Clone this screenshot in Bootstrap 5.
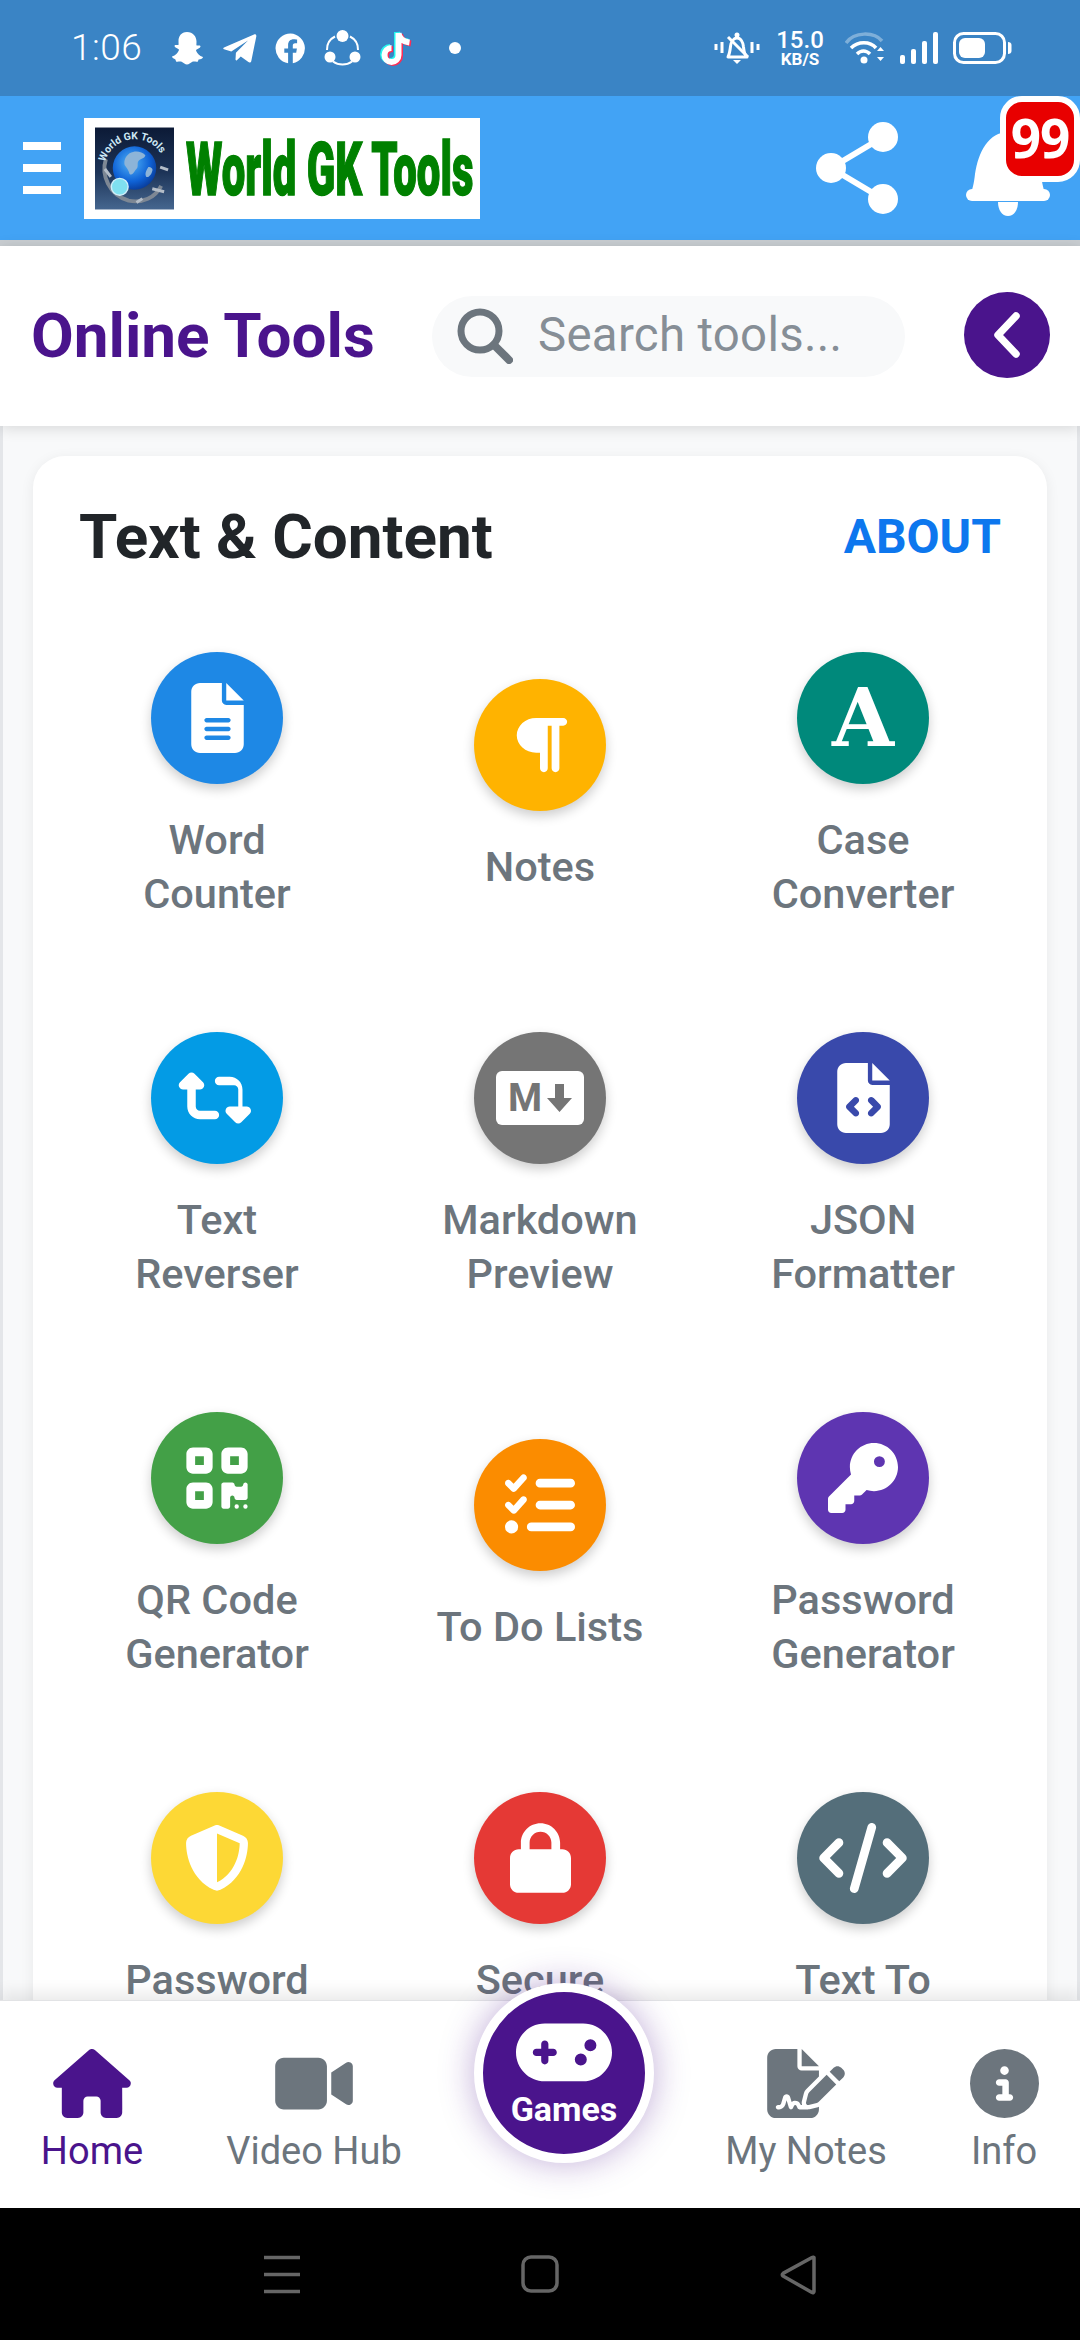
<!doctype html>
<html lang="en">
<head>
<meta charset="utf-8">
<title>Online Tools</title>
<link rel="stylesheet" href="https://cdn.jsdelivr.net/npm/bootstrap@5.3.0/dist/css/bootstrap.min.css">
<style>
html,body{margin:0;height:2340px;overflow:hidden;background:#000;}
body{font-family:Roboto,"Liberation Sans",sans-serif;width:1080px;}
svg{display:block;}
.screen{width:1080px;height:2340px;display:flex;flex-direction:column;overflow:hidden;}
.sbar{height:96px;background:#3a84c5;color:#fff;flex:none;padding-left:71px;}
.clock{font-size:37px;font-weight:300;width:99px;letter-spacing:.5px;}
.st-icons{gap:18px;}
.st-right{margin-left:auto;padding-right:68px;gap:15px;}
.speed{line-height:1;text-align:center;font-weight:500;width:50px;}
.speed b{display:block;font-size:24px;font-weight:500;line-height:22px;}
.speed i{display:block;font-size:17px;font-style:normal;font-weight:700;line-height:17px;}
.topbar{height:144px;background:#42a3f5;flex:none;position:relative;padding-left:23px;}
.burger{width:38px;display:flex;flex-direction:column;gap:14px;}
.burger span{height:8px;background:#fff;display:block;}
.logo-box{width:396px;height:101px;background:#fff;margin-left:23px;padding:9px 11px;gap:12px;}
.top-right{margin-left:auto;}
.share-ic{margin-right:68px;}
.bell-wrap{width:114px;height:144px;position:relative;}
.bell-ic{position:absolute;left:0;top:34px;}
.nbadge{position:absolute;left:34px;top:0;width:80px;height:86px;border:6px solid #fff;border-radius:22px;background:#e80000;color:#fff;font-family:"Noto Sans",sans-serif;font-weight:700;font-size:53px;line-height:72px;text-align:center;letter-spacing:-1px;}
.graybar{height:6px;background:#c9ced2;flex:none;}
.subhead{height:180px;background:#fff;flex:none;padding:0 30px 0 31px;position:relative;z-index:2;box-shadow:0 2px 14px rgba(0,0,0,.14);}
.page-title{font-size:62px;font-weight:700;color:#4a148c;margin:0;white-space:nowrap;width:401px;}
.searchbox{width:473px;height:81px;border-radius:41px;background:#f8f9fa;padding-left:25px;gap:25px;color:#868e96;font-size:47.4px;letter-spacing:.3px;}
.backbtn{width:86px;height:86px;border-radius:50%;background:#4a148c;margin-left:auto;padding:0;border:0;margin-top:-3px;}
.main{flex:1 1 auto;min-height:0;background:#f8f9fa;position:relative;overflow:hidden;padding:30px 30px 0;border-left:3px solid #e4e6e9;border-right:3px solid #e4e6e9;}
.tool-card{background:#fff;border-radius:32px;box-shadow:0 3px 14px rgba(0,0,0,.07);padding:0 46px;height:1700px;}
.card-top{height:162px;}
.card-title{font-size:62px;font-weight:700;color:#212529;margin:0;}
.about-link{font-size:48px;font-weight:700;color:#0d77ee;text-decoration:none;}
.tool-grid{display:grid;grid-template-columns:repeat(3,323px);grid-auto-rows:268px;row-gap:112px;margin:34px -23.5px 0;}
.tool{display:flex;flex-direction:column;align-items:center;justify-content:center;text-align:center;color:#6c757d;font-size:41.5px;font-weight:500;line-height:53.5px;}
.tool-cut{justify-content:flex-start;}
.disc{width:132px;height:132px;border-radius:50%;display:flex;align-items:center;justify-content:center;color:#fff;box-shadow:0 5px 12px rgba(0,0,0,.2);margin-bottom:29px;flex:none;}
.disc svg{fill:currentColor;}
.disc-a{font-family:"DejaVu Serif",serif;font-weight:700;font-size:80px;line-height:1;}
.md-box{width:88px;height:54px;background:#fff;border-radius:6px;color:#757575;gap:5px;}
.md-box span{font-family:Roboto,sans-serif;font-weight:700;font-size:39px;line-height:1;}
.botnav{height:208px;flex:none;background:#fff;position:relative;z-index:3;display:grid;grid-template-columns:184px 260px 240px 244px 152px;box-shadow:0 -8px 14px rgba(0,0,0,.08);border-top:1px solid #e2e3e5;}
.nav-it{display:flex;flex-direction:column;align-items:center;color:#6c757d;text-decoration:none;font-size:38px;line-height:1;padding-top:48px;}
.nav-it.on{color:#4a148c;}
.nav-it svg{fill:currentColor;height:69px;margin-bottom:14px;}
.games{position:absolute;left:474px;top:-18px;width:180px;height:180px;border-radius:50%;background:#4a148c;border:9px solid #fff;box-shadow:0 0 34px rgba(74,20,140,.35);color:#fff;display:flex;flex-direction:column;align-items:center;font-size:34px;font-weight:700;line-height:1;padding-top:22px;text-decoration:none;}
.games svg{fill:#fff;margin-bottom:1px;flex:none;}
.sysnav{height:132px;background:#000;flex:none;position:relative;}
.sysnav svg{position:absolute;left:0;top:0;}
</style>
</head>
<body>
<div class="screen">

<div class="sbar d-flex align-items-center">
  <span class="clock">1:06</span>
  <div class="st-icons d-flex align-items-center">
    <svg width="34" height="34" viewBox="0 0 34 34"><path fill="#fff" d="M17 1c6 0 9.500 4.500 9.500 9.500 0 1.500-.1 2.800-.1 3.800 1.400.9 3.100-.5 4 .8.600 1-1 2.300-3.700 3.300-.6.300-.8.700-.5 1.500 1 2.500 3.200 5 6.800 6-.1 1.400-1.900 2.100-4.400 2.500-.5.800-.3 2-1.200 2.300-1.400.4-3.300-.6-5.400.2-1.600.6-3 2.600-5 2.600s-3.400-2-5-2.600c-2.100-.8-4 .2-5.400-.2-.9-.3-.7-1.500-1.200-2.300C3.900 27.500 2.100 26.800 2 25.400c3.600-1 5.800-3.500 6.800-6 .3-.8.100-1.200-.5-1.500-2.700-1-4.300-2.300-3.700-3.300.9-1.300 2.600.1 4-.8 0-1-.1-2.300-.1-3.800C8.500 5.500 11 1 17 1z"/></svg>
    <svg width="34" height="30" viewBox="0 0 34 30" style="margin-left:1px"><path fill="#fff" d="M1 14.500 31 1.500c1.500-.6 2.600.4 2.300 1.900l-5 24.500c-.3 1.500-1.700 2-2.900 1.200l-7.600-5.500-3.900 3.600c-.6.500-1.400.2-1.400-.6l.4-6.800L25 7.500 8.300 18.500 1 16.200c-1-.3-1-1.300 0-1.700z"/></svg>
    <svg width="31" height="31" viewBox="0 0 31 31"><path fill="#fff" d="M15.500 0.500a15 15 0 0 0-2.400 29.800V19.800H9.300v-4.300h3.800v-3.300c0-3.800 2.200-5.900 5.700-5.900 1.600 0 3.300.3 3.300.3v3.700h-1.900c-1.900 0-2.400 1.200-2.400 2.300v2.800h4.100l-.7 4.300h-3.400v10.500a15 15 0 0 0-2.300-29.700z"/></svg>
    <svg width="37" height="38" viewBox="0 0 37 38"><g fill="none" stroke="#fff" stroke-width="2"><path d="M11 7.500C6 10 2.800 15 3 21"/><path d="M26 7.500c5 2.500 8.200 7.500 8 13.500"/><path d="M9 32.500c5.500 4 13.500 4 19 0"/></g><circle cx="18.500" cy="7" r="6" fill="#fff"/><circle cx="6" cy="28" r="5.500" fill="#fff"/><circle cx="31" cy="28" r="5.500" fill="#fff"/></svg>
    <svg width="34" height="38" viewBox="0 0 34 38"><path fill="none" stroke="#25f4ee" stroke-width="6" d="M18 3v22a7 7 0 1 1-7-7M18 3c.5 5 4 8.500 11 9.500"/><path fill="none" stroke="#fe2c55" stroke-width="6" d="M21 5v22a7 7 0 1 1-7-7M21 5c.5 5 4 8.500 11 9.500"/><path fill="none" stroke="#fff" stroke-width="6" d="M19.500 4v22a7 7 0 1 1-7-7M19.500 4c.5 5 4 8.500 11 9.500"/></svg>
    <svg width="12" height="12" viewBox="0 0 12 12" style="margin-left:18px"><circle cx="6" cy="6" r="6" fill="#fff"/></svg>
  </div>
  <div class="st-right d-flex align-items-center">
    <svg width="46" height="32" viewBox="0 0 46 32"><g fill="none" stroke="#fff" stroke-width="3" stroke-linejoin="round"><path d="M14 25h19c-3-3-3-6-3.500-10C29 10 26.500 6 23 6c-3.500 0-6 4-6.500 8.500-.4 3.500-1 7.500-2.500 10.500z"/><path d="M14 5l20 20"/><path d="M2 12v6M8 10v11M38 10v11M44 12v6"/></g><circle cx="23" cy="3" r="2.500" fill="#fff"/><path d="M19 28h8l-4 4z" fill="#fff"/></svg>
    <div class="speed"><b>15.0</b><i>KB/S</i></div>
    <svg width="40" height="32" viewBox="0 0 40 32" style="margin-left:5px"><path d="M1 11C9-.5 29-.5 37 9" fill="none" stroke="#fff" stroke-opacity=".35" stroke-width="3.500"/><path d="M6 16c7-7 19-7 25 0M12 22c4-4 9-4 13 0" fill="none" stroke="#fff" stroke-width="3.500"/><circle cx="19" cy="28" r="3.500" fill="#fff"/><path d="M32 19l3.500-4 3.500 4zM32 25l3.500 4 3.500-4z" fill="#fff"/></svg>
    <svg width="38" height="32" viewBox="0 0 38 32"><g fill="#fff"><rect x="0" y="23" width="5" height="9" rx="2"/><rect x="11" y="17" width="5" height="15" rx="2"/><rect x="22" y="9" width="5" height="23" rx="2"/><rect x="33" y="0" width="5" height="32" rx="2"/></g></svg>
    <svg width="59" height="32" viewBox="0 0 59 32"><rect x="1.500" y="1.500" width="50" height="29" rx="9" fill="none" stroke="#fff" stroke-width="3"/><rect x="6" y="6" width="26" height="20" rx="6" fill="#fff"/><path d="M55 10c2 0 3.500 1 3.500 3v6c0 2-1.500 3-3.500 3z" fill="#fff"/></svg>
  </div>
</div>

<div class="topbar d-flex align-items-center">
  <div class="burger" aria-label="Menu"><span></span><span></span><span></span></div>
  <div class="logo-box d-flex align-items-center">
    <svg width="80" height="83" viewBox="0 0 80 83" role="img" aria-label="Globe logo">
      <defs>
        <linearGradient id="lg-bg" x1="0" y1="0" x2="0" y2="1"><stop offset="0" stop-color="#0c1a36"/><stop offset=".55" stop-color="#1d3458"/><stop offset="1" stop-color="#45668f"/></linearGradient>
        <radialGradient id="lg-gl" cx=".42" cy=".38" r=".72"><stop offset="0" stop-color="#52b4f7"/><stop offset=".6" stop-color="#0f62d6"/><stop offset="1" stop-color="#062f85"/></radialGradient>
        <path id="lg-arc" d="M10 36A31 31 0 0 1 70 34"/>
      </defs>
      <rect width="80" height="83" fill="url(#lg-bg)"/>
      <path d="M11 32C6 48 14 68 34 74c14 3 27-3 33-15" fill="none" stroke="#7d8794" stroke-width="4"/>
      <circle cx="40" cy="41" r="22" fill="url(#lg-gl)"/>
      <path d="M35 26c6-3 12-2 16 2-1 4-5 3-7 6s1 6-3 9c-2 3-4 6-6 4-1-4-3-6-5-9-1-5 1-9 5-12z" fill="#8db4d8"/>
      <path d="M54 40c3 0 5 2 4 4-1 4-4 7-6 6-2-3 0-7 2-10z" fill="#8db4d8"/>
      <circle cx="25" cy="60" r="8.500" fill="#7fe0f0" stroke="#cfeffa" stroke-width="1.500"/>
      <path d="M58 62l12 3M66 40l8 3M10 42l6 8M48 72l-6 4" stroke="#b4bdc8" stroke-width="3" fill="none"/>
      <text fill="#cfe9f5" font-family="Roboto,sans-serif" font-size="10.500" font-weight="700"><textPath href="#lg-arc" startOffset="1">World GK Tools</textPath></text>
    </svg>
    <svg width="283" height="83" viewBox="0 0 283 83" role="img" aria-label="World GK Tools" style="overflow:visible"><text x="0" y="0" transform="translate(0 68) scale(.566 1)" fill="#008000" stroke="#008000" stroke-width="1.500" font-family="Roboto,sans-serif" font-weight="900" font-size="74">World GK Tools</text></svg>
  </div>
  <div class="top-right d-flex align-items-center">
    <svg class="share-ic" width="82" height="92" viewBox="0 0 82 92"><path d="M15 46 67 15M15 46 67 77" stroke="#fff" stroke-width="6"/><circle cx="15" cy="46" r="15" fill="#fff"/><circle cx="67" cy="15" r="15" fill="#fff"/><circle cx="67" cy="77" r="15" fill="#fff"/></svg>
    <div class="bell-wrap">
      <svg class="bell-ic" width="84" height="88" viewBox="0 0 84 88"><path fill="#fff" d="M42 2C23 2 12 22 9 44 8 54 6 60 6 60h72s-2-6-3-16C72 22 61 2 42 2z"/><rect x="0" y="59" width="84" height="12" rx="6" fill="#fff"/><path d="M32 72h20c0 8-4 14-10 14s-10-6-10-14z" fill="#fff"/></svg>
      <span class="nbadge">99</span>
    </div>
  </div>
</div>
<div class="graybar"></div>

<div class="subhead d-flex align-items-center">
  <h1 class="page-title">Online Tools</h1>
  <div class="searchbox d-flex align-items-center">
    <svg width="56" height="56" viewBox="0 0 56 56"><circle cx="23" cy="23" r="19" fill="none" stroke="#6c757d" stroke-width="7"/><path d="M37 37 52 52" stroke="#6c757d" stroke-width="8" stroke-linecap="round"/></svg>
    <span>Search tools...</span>
  </div>
  <button class="backbtn d-flex align-items-center justify-content-center" type="button" aria-label="Back"><svg width="30" height="48" viewBox="0 0 30 48"><path d="M24 5 6 24l18 19" fill="none" stroke="#fff" stroke-width="7.500" stroke-linecap="round" stroke-linejoin="round"/></svg></button>
</div>

<main class="main">
  <section class="tool-card">
    <div class="card-top d-flex justify-content-between align-items-center">
      <h2 class="card-title">Text &amp; Content</h2>
      <a class="about-link" href="#">ABOUT</a>
    </div>
    <div class="tool-grid">
      <div class="tool"><div class="disc" style="background:#1e88e5"><svg width="53" height="70" viewBox="0 0 384 512"><path d="M64 0C28.700 0 0 28.700 0 64V448c0 35.300 28.700 64 64 64H320c35.300 0 64-28.700 64-64V160H256c-17.700 0-32-14.300-32-32V0H64zM256 0V128H384L256 0zM112 256H272c8.800 0 16 7.200 16 16s-7.200 16-16 16H112c-8.800 0-16-7.200-16-16s7.200-16 16-16zm0 64H272c8.800 0 16 7.200 16 16s-7.200 16-16 16H112c-8.800 0-16-7.200-16-16s7.200-16 16-16zm0 64H272c8.800 0 16 7.200 16 16s-7.200 16-16 16H112c-8.800 0-16-7.200-16-16s7.200-16 16-16z"/></svg></div>Word<br>Counter</div>
      <div class="tool"><div class="disc" style="background:#ffb300"><svg width="56" height="62" viewBox="0 0 448 512"><path d="M192 32h224c17.700 0 32 14.300 32 32s-14.300 32-32 32H384v352c0 17.700-14.300 32-32 32s-32-14.300-32-32V96H288v352c0 17.700-14.300 32-32 32s-32-14.300-32-32V320H192c-88.400 0-160-64-160-144S103.600 32 192 32z"/></svg></div>Notes</div>
      <div class="tool"><div class="disc disc-a" style="background:#00897b">A</div>Case<br>Converter</div>

      <div class="tool"><div class="disc" style="background:#039be5"><svg width="78" height="68" viewBox="0 0 576 512"><path d="M272 416c17.700 0 32-14.300 32-32s-14.300-32-32-32H160c-17.700 0-32-14.300-32-32V192h32c12.900 0 24.600-7.800 29.600-19.800s2.200-25.700-6.900-34.900l-64-64c-12.500-12.500-32.800-12.500-45.300 0l-64 64c-9.200 9.200-11.900 22.900-6.900 34.900s16.600 19.800 29.600 19.800l32 0 0 128c0 53 43 96 96 96H272zM304 96c-17.700 0-32 14.300-32 32s14.300 32 32 32l112 0c17.700 0 32 14.300 32 32l0 128H384c-12.900 0-24.600 7.800-29.600 19.800s-2.200 25.700 6.900 34.900l64 64c12.500 12.500 32.800 12.500 45.300 0l64-64c9.200-9.200 11.900-22.900 6.900-34.900s-16.600-19.800-29.600-19.800l-32 0V192c0-53-43-96-96-96L304 96z"/></svg></div>Text<br>Reverser</div>
      <div class="tool"><div class="disc" style="background:#757575"><div class="md-box d-flex align-items-center justify-content-center"><span>M</span><svg width="25" height="28" viewBox="0 0 25 28"><path d="M8 0h9v14h8L12.500 28 0 14h8z"/></svg></div></div>Markdown<br>Preview</div>
      <div class="tool"><div class="disc" style="background:#3949ab"><svg width="53" height="70" viewBox="0 0 384 512"><path d="M64 0C28.700 0 0 28.700 0 64V448c0 35.300 28.700 64 64 64H320c35.300 0 64-28.700 64-64V160H256c-17.700 0-32-14.300-32-32V0H64zM256 0V128H384L256 0zM153 289l-31 31 31 31c9.400 9.400 9.400 24.600 0 33.900s-24.600 9.400-33.900 0L71 337c-9.400-9.400-9.400-24.600 0-33.900l48-48c9.400-9.400 24.600-9.400 33.900 0s9.400 24.600 0 33.900zM265 255l48 48c9.400 9.400 9.400 24.600 0 33.900l-48 48c-9.400 9.400-24.600 9.400-33.900 0s-9.400-24.600 0-33.900l31-31-31-31c-9.400-9.400-9.400-24.600 0-33.900s24.600-9.400 33.900 0z"/></svg></div>JSON<br>Formatter</div>

      <div class="tool"><div class="disc" style="background:#43a047"><svg width="62" height="70" viewBox="0 0 448 512"><path d="M0 80C0 53.500 21.500 32 48 32h96c26.500 0 48 21.500 48 48v96c0 26.500-21.500 48-48 48H48c-26.500 0-48-21.500-48-48V80zM64 96v64h64V96H64zM0 336c0-26.500 21.500-48 48-48h96c26.500 0 48 21.500 48 48v96c0 26.500-21.500 48-48 48H48c-26.500 0-48-21.500-48-48V336zm64 16v64h64V352H64zM304 32h96c26.500 0 48 21.500 48 48v96c0 26.500-21.500 48-48 48H304c-26.500 0-48-21.500-48-48V80c0-26.500 21.500-48 48-48zm80 64H320v64h64V96zM256 304c0-8.800 7.200-16 16-16h64c8.800 0 16 7.200 16 16s7.200 16 16 16h32c8.800 0 16-7.200 16-16s7.200-16 16-16s16 7.200 16 16v96c0 8.800-7.200 16-16 16H368c-8.800 0-16-7.200-16-16s-7.200-16-16-16s-16 7.200-16 16v64c0 8.800-7.200 16-16 16H272c-8.800 0-16-7.200-16-16V304zM368 480a16 16 0 1 1 0-32 16 16 0 1 1 0 32zm64 0a16 16 0 1 1 0-32 16 16 0 1 1 0 32z"/></svg></div>QR Code<br>Generator</div>
      <div class="tool"><div class="disc" style="background:#fb8c00"><svg width="70" height="70" viewBox="0 0 512 512"><path d="M152.100 38.200c9.900 8.900 10.700 24 1.800 33.900l-72 80c-4.400 4.900-10.600 7.800-17.200 7.900s-12.900-2.400-17.600-7L7 113C-2.300 103.600-2.300 88.400 7 79s24.600-9.400 33.900 0l22.100 22.100 55.100-61.200c8.900-9.900 24-10.700 33.900-1.800zm0 160c9.900 8.900 10.700 24 1.800 33.900l-72 80c-4.400 4.900-10.600 7.800-17.200 7.900s-12.900-2.400-17.600-7L7 273c-9.400-9.400-9.400-24.600 0-33.900s24.600-9.400 33.900 0l22.100 22.100 55.100-61.200c8.900-9.900 24-10.700 33.900-1.800zM224 96c0-17.700 14.300-32 32-32H480c17.700 0 32 14.300 32 32s-14.300 32-32 32H256c-17.700 0-32-14.300-32-32zm0 160c0-17.700 14.300-32 32-32H480c17.700 0 32 14.300 32 32s-14.300 32-32 32H256c-17.700 0-32-14.300-32-32zM160 416c0-17.700 14.300-32 32-32H480c17.700 0 32 14.300 32 32s-14.300 32-32 32H192c-17.700 0-32-14.300-32-32zM48 368a48 48 0 1 1 0 96 48 48 0 1 1 0-96z"/></svg></div>To Do Lists</div>
      <div class="tool"><div class="disc" style="background:#5e35b1"><svg width="70" height="70" viewBox="0 0 512 512"><path d="M336 352c97.200 0 176-78.800 176-176S433.200 0 336 0S160 78.800 160 176c0 18.700 2.900 36.800 8.300 53.700L7 391c-4.500 4.500-7 10.600-7 17v80c0 13.300 10.700 24 24 24h80c13.300 0 24-10.700 24-24V448h40c13.300 0 24-10.700 24-24V384h40c6.400 0 12.500-2.500 17-7l33.300-33.300c16.900 5.400 35 8.300 53.700 8.300zM376 96a40 40 0 1 1 0 80 40 40 0 1 1 0-80z"/></svg></div>Password<br>Generator</div>

      <div class="tool tool-cut"><div class="disc" style="background:#fdd835"><svg width="66" height="70" viewBox="0 0 512 512"><path d="M256 0c4.600 0 9.200 1 13.400 2.900L457.700 82.800c22 9.300 38.400 31 38.300 57.200c-.5 99.200-41.300 280.700-213.600 363.200c-16.700 8-36.100 8-52.800 0C57.300 420.700 16.500 239.200 16 140c-.1-26.200 16.300-47.900 38.300-57.200L242.700 2.900C246.800 1 251.400 0 256 0zm0 66.800V444.800C394 378 431.100 230.100 432 141.400L256 66.800l0 0z"/></svg></div>Password</div>
      <div class="tool tool-cut"><div class="disc" style="background:#e53935"><svg width="61" height="70" viewBox="0 0 448 512"><path d="M144 144v48H304V144c0-44.200-35.800-80-80-80s-80 35.800-80 80zM80 192V144C80 64.500 144.500 0 224 0s144 64.500 144 144v48h16c35.300 0 64 28.700 64 64V448c0 35.300-28.700 64-64 64H64c-35.300 0-64-28.700-64-64V256c0-35.300 28.700-64 64-64H80z"/></svg></div>Secure</div>
      <div class="tool tool-cut"><div class="disc" style="background:#546e7a"><svg width="88" height="70" viewBox="0 0 640 512"><path d="M392.800 1.200c-17-4.900-34.700 5-39.600 22l-128 448c-4.900 17 5 34.700 22 39.600s34.700-5 39.600-22l128-448c4.900-17-5-34.700-22-39.600zm80.600 120.100c-12.500 12.500-12.500 32.800 0 45.300L562.700 256l-89.400 89.400c-12.500 12.500-12.500 32.800 0 45.300s32.800 12.500 45.300 0l112-112c12.500-12.500 12.500-32.800 0-45.300l-112-112c-12.500-12.500-32.800-12.500-45.300 0zm-306.700 0c-12.500-12.500-32.800-12.500-45.300 0l-112 112c-12.500 12.500-12.500 32.800 0 45.300l112 112c12.500 12.500 32.800 12.500 45.300 0s12.500-32.800 0-45.300L77.300 256l89.400-89.400c12.500-12.500 12.500-32.800 0-45.300z"/></svg></div>Text To</div>
    </div>
  </section>
</main>

<nav class="botnav">
  <a class="nav-it on" href="#"><svg width="78" viewBox="0 0 576 512"><path d="M575.800 255.500c0 18-15 32.100-32 32.100h-32l.7 160.200c0 2.700-.2 5.400-.5 8.100V472c0 22.100-17.900 40-40 40H456c-1.100 0-2.200 0-3.300-.1c-1.400 .1-2.800 .1-4.200 .1H416 392c-22.100 0-40-17.900-40-40V448 384c0-17.700-14.300-32-32-32H256c-17.700 0-32 14.300-32 32v64 24c0 22.100-17.900 40-40 40H160 128.100c-1.500 0-3-.1-4.500-.2c-1.200 .1-2.400 .2-3.600 .2H104c-22.100 0-40-17.900-40-40V360c0-.9 0-1.900 .1-2.800V287.600H32c-18 0-32-14-32-32.100c0-9 3-17 10-24L266.400 8c7-7 15-8 22-8s15 2 21 7L564.800 231.500c8 7 12 15 11 24z"/></svg>Home</a>
  <a class="nav-it" href="#"><svg width="78" viewBox="0 0 576 512"><path d="M0 128C0 92.700 28.700 64 64 64H320c35.300 0 64 28.700 64 64V384c0 35.300-28.700 64-64 64H64c-35.300 0-64-28.700-64-64V128zM559.100 99.800c10.400 5.600 16.900 16.400 16.900 28.200V384c0 11.800-6.500 22.600-16.900 28.200s-23 5-32.900-1.600l-96-64L416 337.100V320 192 174.900l14.200-9.500 96-64c9.800-6.500 22.400-7.200 32.900-1.600z"/></svg>Video Hub</a>
  <div></div>
  <a class="nav-it" href="#"><svg width="78" viewBox="0 0 576 512"><path d="M64 0C28.700 0 0 28.700 0 64V448c0 35.300 28.700 64 64 64H320c35.300 0 64-28.700 64-64V428.700c-2.700 1.100-5.400 2-8.200 2.700l-60.100 15c-3 .7-6 1.200-9 1.400c-.9 .1-1.800 .2-2.700 .2H240c-6.100 0-11.600-3.400-14.300-8.800l-8.800-17.700c-1.700-3.400-5.100-5.500-8.800-5.500s-7.200 2.100-8.800 5.500l-8.800 17.700c-2.900 5.900-9.200 9.400-15.700 8.800s-12.100-5.100-13.900-11.300L144 381l-9.800 32.800c-6.100 20.300-24.800 34.200-46 34.200H80c-8.800 0-16-7.200-16-16s7.200-16 16-16h8.200c7.100 0 13.300-4.600 15.300-11.400l14.900-49.500c3.400-11.300 13.800-19.100 25.600-19.100s22.200 7.800 25.600 19.100l11.600 38.600c7.400-6.200 16.800-9.700 26.800-9.700c15.900 0 30.400 9 37.500 23.200l4.400 8.800h8.900c-3.100-8.800-3.700-18.400-1.400-27.800l15-60.100c2.800-11.300 8.600-21.500 16.900-29.700L384 203.600V160H256c-17.700 0-32-14.300-32-32V0H64zM256 0V128H384L256 0zM549.800 139.700c-15.600-15.600-40.900-15.600-56.600 0l-29.400 29.400 71 71 29.400-29.400c15.600-15.600 15.600-40.900 0-56.600l-14.400-14.400zM311.900 321c-4.100 4.100-7 9.200-8.400 14.900l-15 60.100c-1.400 5.500 .2 11.200 4.200 15.200s9.700 5.600 15.200 4.200l60.100-15c5.600-1.400 10.800-4.300 14.900-8.400L512.100 262.700l-71-71L311.900 321z"/></svg>My Notes</a>
  <a class="nav-it" href="#"><svg width="69" viewBox="0 0 512 512"><path d="M256 512A256 256 0 1 0 256 0a256 256 0 1 0 0 512zM216 336h24V272H216c-13.300 0-24-10.700-24-24s10.700-24 24-24h48c13.300 0 24 10.700 24 24v88h8c13.300 0 24 10.700 24 24s-10.700 24-24 24H216c-13.300 0-24-10.700-24-24s10.700-24 24-24zm40-208a32 32 0 1 1 0 64 32 32 0 1 1 0-64z"/></svg>Info</a>
  <a class="games" href="#"><svg width="96" height="76.800" viewBox="0 0 640 512"><path d="M192 64C86 64 0 150 0 256S86 448 192 448H448c106 0 192-86 192-192s-86-192-192-192H192zM496 168a40 40 0 1 1 0 80 40 40 0 1 1 0-80zM392 304a40 40 0 1 1 80 0 40 40 0 1 1 -80 0zM168 200c0-13.300 10.700-24 24-24s24 10.700 24 24v32h32c13.300 0 24 10.700 24 24s-10.700 24-24 24H216v32c0 13.300-10.700 24-24 24s-24-10.700-24-24V280H136c-13.300 0-24-10.700-24-24s10.700-24 24-24h32V200z"/></svg>Games</a>
</nav>

<div class="sysnav">
  <svg width="1080" height="132" viewBox="0 0 1080 132"><g fill="none" stroke="#666" stroke-width="3.500"><path d="M264 49.500h36M264 66.500h36M264 83.500h36"/><rect x="523" y="49" width="34" height="34" rx="8"/><path d="M814 49.500v34c0 1-1 1.500-2 1L783 68c-1-.7-1-2 0-2.600l29-15.900c1-.5 2-.2 2 .5z" stroke-linejoin="round"/></g></svg>
</div>
</div>
<script src="https://cdn.jsdelivr.net/npm/bootstrap@5.3.0/dist/js/bootstrap.bundle.min.js"></script>
</body>
</html>
